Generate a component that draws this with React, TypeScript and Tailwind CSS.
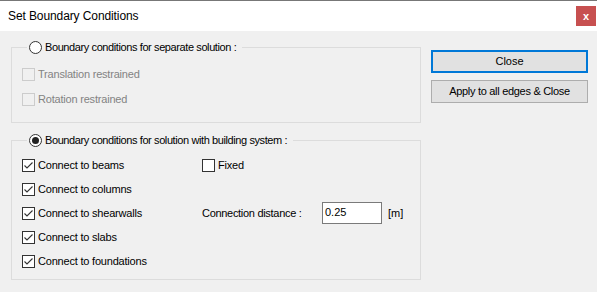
import React from "react";

const font = { fontFamily: '"Liberation Sans", Arial, sans-serif' };

function Check({ checked, disabled }: { checked?: boolean; disabled?: boolean }) {
  return (
    <span
      className={
        "flex h-[13px] w-[13px] shrink-0 items-center justify-center border " +
        (disabled ? "border-[#cccccc] bg-[#f0f0f0]" : "border-[#333333] bg-white")
      }
    >
      {checked && (
        <svg width="11" height="11" viewBox="0 0 11 11">
          <polyline points="1.5,5.5 4,8 9.5,2.5" fill="none" stroke="#333" strokeWidth="1.1" />
        </svg>
      )}
    </span>
  );
}

function Radio({ checked }: { checked?: boolean }) {
  return (
    <span className="flex h-[13px] w-[13px] shrink-0 items-center justify-center rounded-full border border-[#333333] bg-white">
      {checked && <span className="h-[7px] w-[7px] rounded-full bg-[#222]" />}
    </span>
  );
}

function Row({ label, checked, disabled }: { label: string; checked?: boolean; disabled?: boolean }) {
  return (
    <div className="flex h-[13px] items-center gap-[3px]">
      <Check checked={checked} disabled={disabled} />
      <span className={"leading-[13px] tracking-[-0.2px] " + (disabled ? "text-[#838383]" : "text-black")}>{label}</span>
    </div>
  );
}

function Legend({ label, checked }: { label: string; checked?: boolean }) {
  return (
    <legend className="ml-[5px] pl-[2px] pr-[6px]">
      <div className="flex h-[13px] items-center gap-[3px]">
        <Radio checked={checked} />
        <span className="leading-[13px] tracking-[-0.4px]">{label}</span>
      </div>
    </legend>
  );
}

export default function App() {
  return (
    <div className="h-[292px] w-[597px] overflow-hidden bg-[#f0f0f0] text-[11px] text-black" style={font}>
      <div className="flex h-[31px] items-center justify-between border-t border-[#777777] bg-white pl-[8px]">
        <span className="text-[12px] tracking-[-0.1px]">Set Boundary Conditions</span>
        <span className="mr-[1px] flex h-[20px] w-[20px] items-center justify-center bg-[#c75050] text-[11px] font-bold leading-none text-white">
          x
        </span>
      </div>

      <div className="flex gap-[10px] pl-[11px] pt-[10px]">
        <div className="flex w-[410px] flex-col">
          <fieldset className="border border-[#dcdcdc] pb-[16px] pl-[10px] pt-[14px]">
            <Legend label="Boundary conditions for separate solution :" />
            <div className="flex flex-col gap-[12px]">
              <Row label="Translation restrained" disabled />
              <Row label="Rotation restrained" disabled />
            </div>
          </fieldset>

          <fieldset className="mt-[11px] border border-[#dcdcdc] pb-[11px] pl-[10px] pt-[12px]">
            <Legend label="Boundary conditions for solution with building system :" checked />
            <div className="flex">
              <div className="flex w-[180px] flex-col gap-[11px]">
                <Row label="Connect to beams" checked />
                <Row label="Connect to columns" checked />
                <Row label="Connect to shearwalls" checked />
                <Row label="Connect to slabs" checked />
                <Row label="Connect to foundations" checked />
              </div>
              <div className="flex flex-col">
                <Row label="Fixed" />
                <div className="mt-[30px] flex items-center">
                  <span className="w-[120px] tracking-[-0.3px]">Connection distance :</span>
                  <div className="flex h-[22px] w-[60px] items-center border border-[#7a7a7a] bg-white pl-[2px] pb-[2px]">
                    0.25
                  </div>
                  <span className="ml-[6px]">[m]</span>
                </div>
              </div>
            </div>
          </fieldset>
        </div>

        <div className="mt-[9px] flex w-[157px] flex-col gap-[7px]">
          <div className="flex h-[23px] items-center justify-center border-2 border-[#0078d7] bg-[#e1e1e1]">Close</div>
          <div className="flex h-[23px] items-center justify-center border border-[#adadad] bg-[#e1e1e1] tracking-[-0.3px]">
            Apply to all edges &amp; Close
          </div>
        </div>
      </div>
    </div>
  );
}
